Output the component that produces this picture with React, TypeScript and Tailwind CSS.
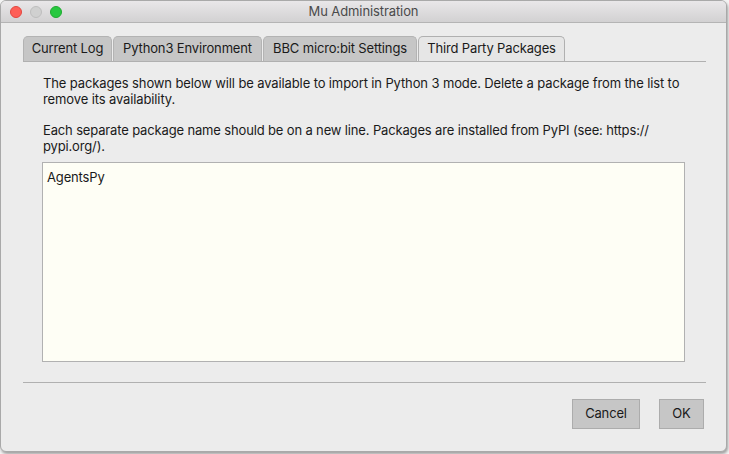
import React from "react";

const font = { fontFamily: "Inter, 'Noto Sans', 'Liberation Sans', sans-serif" };

function Tab({ label, w, selected }: { label: string; w: string; selected?: boolean }) {
  return (
    <div
      className={
        "flex items-center justify-center h-[25px] rounded-t-[5px] border border-b-0 text-[13px] tracking-[-0.15px] text-[#1a1a1a] " +
        w +
        (selected ? " bg-[#e6e6e6] border-[#b0b0b0]" : " bg-[#c6c6c6] border-[#b3b3b3]")
      }
    >
      {label}
    </div>
  );
}

export default function App() {
  return (
    <div className="w-[729px] h-[454px] bg-[#f4f4f4] overflow-hidden" style={font}>
      <div className="w-[727px] h-[452px] rounded-[6px] border border-[#a9a9a9] bg-[#ececec] shadow-[1px_2px_3px_rgba(0,0,0,0.35)] overflow-hidden flex flex-col">
        <div className="relative h-[22px] shrink-0 bg-gradient-to-b from-[#e9e7e9] to-[#d2d1d2] border-b border-[#b4b4b4] flex items-center justify-center">
          <div className="absolute left-[9px] top-[5px] flex gap-[8px]">
            <div className="w-[12px] h-[12px] rounded-full bg-[#fe5f57] border border-[#e2463f]" />
            <div className="w-[12px] h-[12px] rounded-full bg-[#d0d0d0] border border-[#bdbdbd]" />
            <div className="w-[12px] h-[12px] rounded-full bg-[#28c840] border border-[#1eaa2f]" />
          </div>
          <span className="text-[13px] tracking-[-0.1px] text-[#4a4a4a]">Mu Administration</span>
        </div>
        <div className="flex-1 flex flex-col pl-[22px] pr-[20px] pt-[13px]">
          <div className="flex gap-[1px]">
            <Tab label="Current Log" w="w-[89px]" />
            <Tab label="Python3 Environment" w="w-[149px]" />
            <Tab label="BBC micro:bit Settings" w="w-[154px]" />
            <Tab label="Third Party Packages" w="w-[147px]" selected />
          </div>
          <div className="border-t border-[#b0b0b0] flex flex-col pl-[19px] pr-[21px] pt-[13px]">
            <p className="ml-[1px] text-[13px] leading-[16px] tracking-[-0.12px] text-[#1a1a1a] whitespace-nowrap">
              The packages shown below will be available to import in Python 3 mode. Delete a package from the list to
              <br />
              remove its availability.
            </p>
            <p className="ml-[1px] mt-[15px] text-[13px] leading-[16px] tracking-[-0.15px] text-[#1a1a1a] whitespace-nowrap">
              Each separate package name should be on a new line. Packages are installed from PyPI (see: https://
              <br />
              pypi.org/).
            </p>
            <div className="mt-[8px] h-[200px] bg-[#fefef5] border border-[#b1b1b1] px-[4px] pt-[6px] text-[13px] leading-[16px] tracking-[-0.15px] text-[#1a1a1a]">
              AgentsPy
            </div>
          </div>
          <div className="mt-[20px] border-t border-[#b0b0b0]" />
          <div className="flex justify-end gap-[19px] pt-[16px] pr-[2px]">
            <button className="w-[68px] h-[30px] bg-[#c6c6c6] border border-[#acacac] text-[13px] tracking-[-0.15px] text-[#1a1a1a]">
              Cancel
            </button>
            <button className="w-[45px] h-[30px] bg-[#c6c6c6] border border-[#acacac] text-[13px] tracking-[-0.15px] text-[#1a1a1a]">
              OK
            </button>
          </div>
        </div>
      </div>
    </div>
  );
}
